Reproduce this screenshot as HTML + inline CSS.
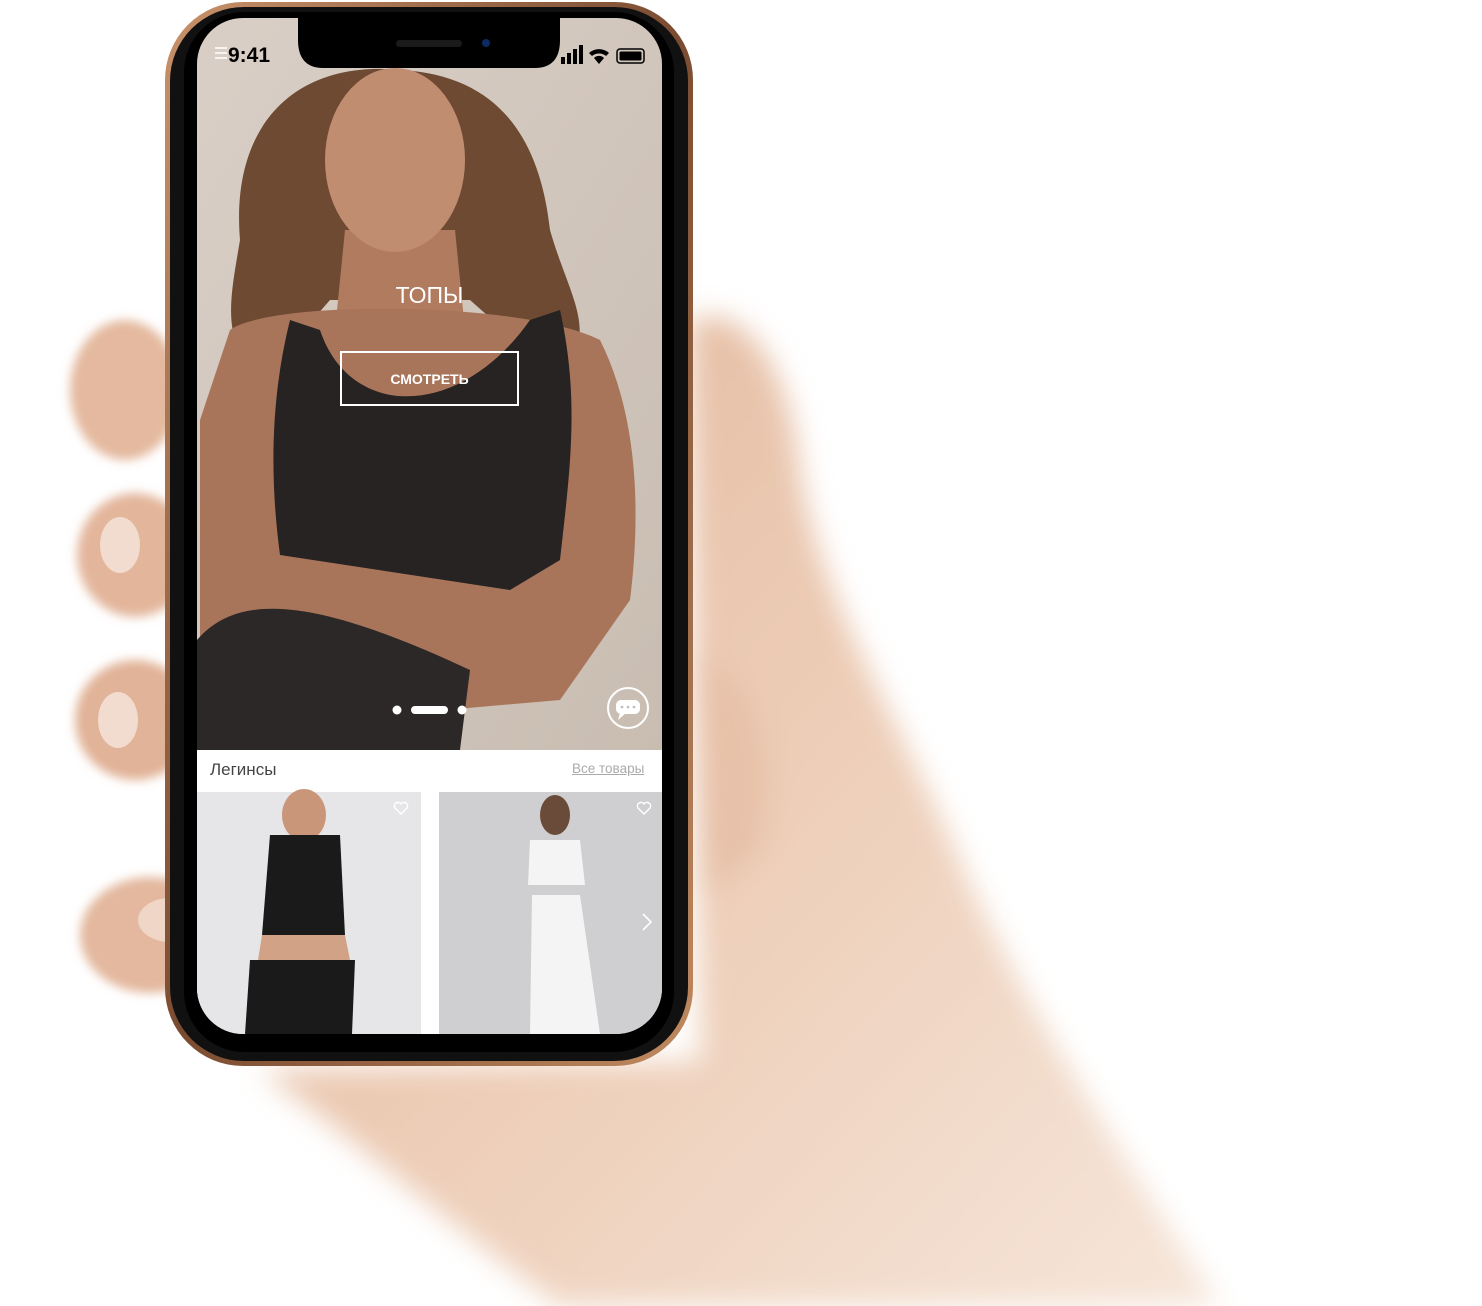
<!DOCTYPE html>
<html><head><meta charset="utf-8">
<style>
html,body{margin:0;padding:0;background:#fff;}
body{width:1482px;height:1306px;position:relative;overflow:hidden;font-family:"Liberation Sans","DejaVu Sans",sans-serif;}
svg{position:absolute;left:0;top:0;}
.t{position:absolute;color:#fff;}
</style></head><body>
<svg width="1482" height="1306" viewBox="0 0 1482 1306">
<defs>
<filter id="b" x="-20%" y="-20%" width="140%" height="140%"><feGaussianBlur stdDeviation="14"/></filter>
<filter id="b2"><feGaussianBlur stdDeviation="5"/></filter>
<linearGradient id="skin" x1="0" y1="0" x2="1" y2="1"><stop offset="0" stop-color="#e2b79c"/><stop offset="0.5" stop-color="#edcdb7"/><stop offset="1" stop-color="#f6e6da"/></linearGradient>
<linearGradient id="bg" x1="0" y1="0" x2="1" y2="1"><stop offset="0" stop-color="#d9cfc6"/><stop offset="1" stop-color="#c9bdb2"/></linearGradient>
<linearGradient id="rim" x1="0" y1="0" x2="1" y2="1"><stop offset="0" stop-color="#c9926a"/><stop offset="0.5" stop-color="#7a4b30"/><stop offset="1" stop-color="#c08a60"/></linearGradient>
<clipPath id="scr"><rect x="197" y="18" width="465" height="1016" rx="46"/></clipPath>
</defs>
<g filter="url(#b)">
<path d="M690 320 C740 300 790 360 800 470 C820 600 900 720 960 860 C1020 1000 1120 1150 1220 1306 L560 1306 C480 1250 380 1160 260 1070 L700 1060 Z" fill="url(#skin)"/>
<path d="M693 650 C760 680 780 760 760 850 L700 900 Z" fill="#e7c1a8"/>
</g>
<g filter="url(#b2)">
<ellipse cx="125" cy="390" rx="55" ry="70" fill="#e4b99f"/>
<ellipse cx="135" cy="555" rx="58" ry="62" fill="#e3b69b"/>
<ellipse cx="135" cy="720" rx="60" ry="60" fill="#e1b398"/>
<ellipse cx="150" cy="935" rx="70" ry="58" fill="#e3b89e"/>
</g>
<ellipse cx="120" cy="545" rx="20" ry="28" fill="#f2dccf"/>
<ellipse cx="118" cy="720" rx="20" ry="28" fill="#f2dccf"/>
<ellipse cx="170" cy="920" rx="32" ry="22" fill="#efd6c6"/>
<rect x="165" y="2" width="528" height="1064" rx="78" fill="url(#rim)"/>
<rect x="170" y="7" width="518" height="1054" rx="74" fill="#111"/>
<rect x="184" y="12" width="490" height="1040" rx="60" fill="#000"/>
<g clip-path="url(#scr)">
<rect x="197" y="18" width="465" height="732" fill="url(#bg)"/>
<path d="M240 240 C230 120 300 60 400 70 C500 75 540 140 550 230 C570 300 600 330 560 380 L470 300 L330 300 L260 380 C220 340 230 300 240 240Z" fill="#6e4a33"/>
<path d="M345 230 L455 230 L465 330 L335 330Z" fill="#b07b5e"/>
<ellipse cx="395" cy="160" rx="70" ry="92" fill="#c08d70"/>
<path d="M230 330 C270 300 520 300 600 340 C640 420 640 520 630 600 L560 700 L330 720 L200 640 L200 420Z" fill="#a9755a"/>
<path d="M290 320 L320 330 C350 420 460 420 530 320 L560 310 C580 400 570 470 560 560 L510 590 L280 555 C270 480 270 400 290 320Z" fill="#262322"/>
<path d="M197 640 C240 590 320 600 470 670 L460 750 L197 750Z" fill="#2b2827"/>
<rect x="197" y="750" width="465" height="284" fill="#fff"/>
<rect x="197" y="792" width="224" height="242" fill="#e6e6e8"/>
<rect x="439" y="792" width="223" height="242" fill="#cfcfd1"/>
<ellipse cx="304" cy="815" rx="22" ry="26" fill="#c9967a"/>
<path d="M270 835 L340 835 L345 935 L262 935Z" fill="#1a1a1a"/>
<path d="M262 935 L345 935 L350 960 L258 960Z" fill="#d2a286"/>
<path d="M250 960 L355 960 L352 1034 L245 1034Z" fill="#1a1a1a"/>
<ellipse cx="555" cy="815" rx="15" ry="20" fill="#6a4a38"/>
<path d="M530 840 L580 840 L585 885 L528 885Z" fill="#f4f4f4"/>
<path d="M532 895 L580 895 L600 1034 L530 1034Z" fill="#f4f4f4"/>
</g>
<path d="M298 18 L560 18 L560 40 C560 58 552 68 535 68 L323 68 C306 68 298 58 298 40Z" fill="#000"/>
<rect x="396" y="40" width="66" height="7" rx="3.5" fill="#1a1a1a"/>
<circle cx="486" cy="43" r="4" fill="#0c2b66"/>
<rect x="561" y="57" width="4" height="7" fill="#000"/><rect x="567" y="53" width="4" height="11" fill="#000"/><rect x="573" y="49" width="4" height="15" fill="#000"/><rect x="579" y="45" width="4" height="19" fill="#000"/>
<path d="M589 53 A15 15 0 0 1 609 53 L606 56 A11 11 0 0 0 592 56Z M594 58 A7 7 0 0 1 604 58 L599 64Z" fill="#000"/>
<rect x="617" y="49" width="27" height="14" rx="3" fill="none" stroke="#000" stroke-width="1.5"/><rect x="619.5" y="51.5" width="22" height="9" rx="1.5" fill="#000"/>
<rect x="341" y="352" width="177" height="53" fill="none" stroke="#fff" stroke-width="2"/>
<circle cx="397" cy="710" r="4.5" fill="#fff"/><rect x="411" y="706" width="37" height="8" rx="4" fill="#fff"/><circle cx="462" cy="710" r="4.5" fill="#fff"/>
<circle cx="628" cy="708" r="20" fill="none" stroke="#fff" stroke-width="2"/>
<rect x="616" y="700" width="24" height="14" rx="5" fill="#fff"/><path d="M620 713 L618 720 L626 713Z" fill="#fff"/>
<circle cx="622" cy="707" r="1.3" fill="#bbb"/><circle cx="628" cy="707" r="1.3" fill="#bbb"/><circle cx="634" cy="707" r="1.3" fill="#bbb"/>
<path d="M401 814 l-6 -6 a3.5 3.5 0 0 1 6 -4 a3.5 3.5 0 0 1 6 4Z" fill="none" stroke="#fff" stroke-width="1.4"/>
<path d="M644 814 l-6 -6 a3.5 3.5 0 0 1 6 -4 a3.5 3.5 0 0 1 6 4Z" fill="none" stroke="#fff" stroke-width="1.4"/>
<path d="M643 914 l8 8 l-8 8" fill="none" stroke="#fff" stroke-width="1.6"/>
<path d="M215 48 h12 M215 53 h12 M215 58 h12" stroke="#fff" stroke-width="1.5"/>
</svg>
<div class="t" style="left:228px;top:44px;font-size:21px;font-weight:bold;color:#000;">9:41</div>
<div class="t" style="left:341px;top:282px;width:177px;text-align:center;font-size:23px;">ТОПЫ</div>
<div class="t" style="left:341px;top:371px;width:177px;text-align:center;font-size:14px;font-weight:bold;">СМОТРЕТЬ</div>
<div class="t" style="left:210px;top:760px;font-size:17px;color:#444;">Легинсы</div>
<div class="t" style="left:572px;top:761px;font-size:13.5px;color:#aaa;text-decoration:underline;">Все товары</div>
</body></html>
